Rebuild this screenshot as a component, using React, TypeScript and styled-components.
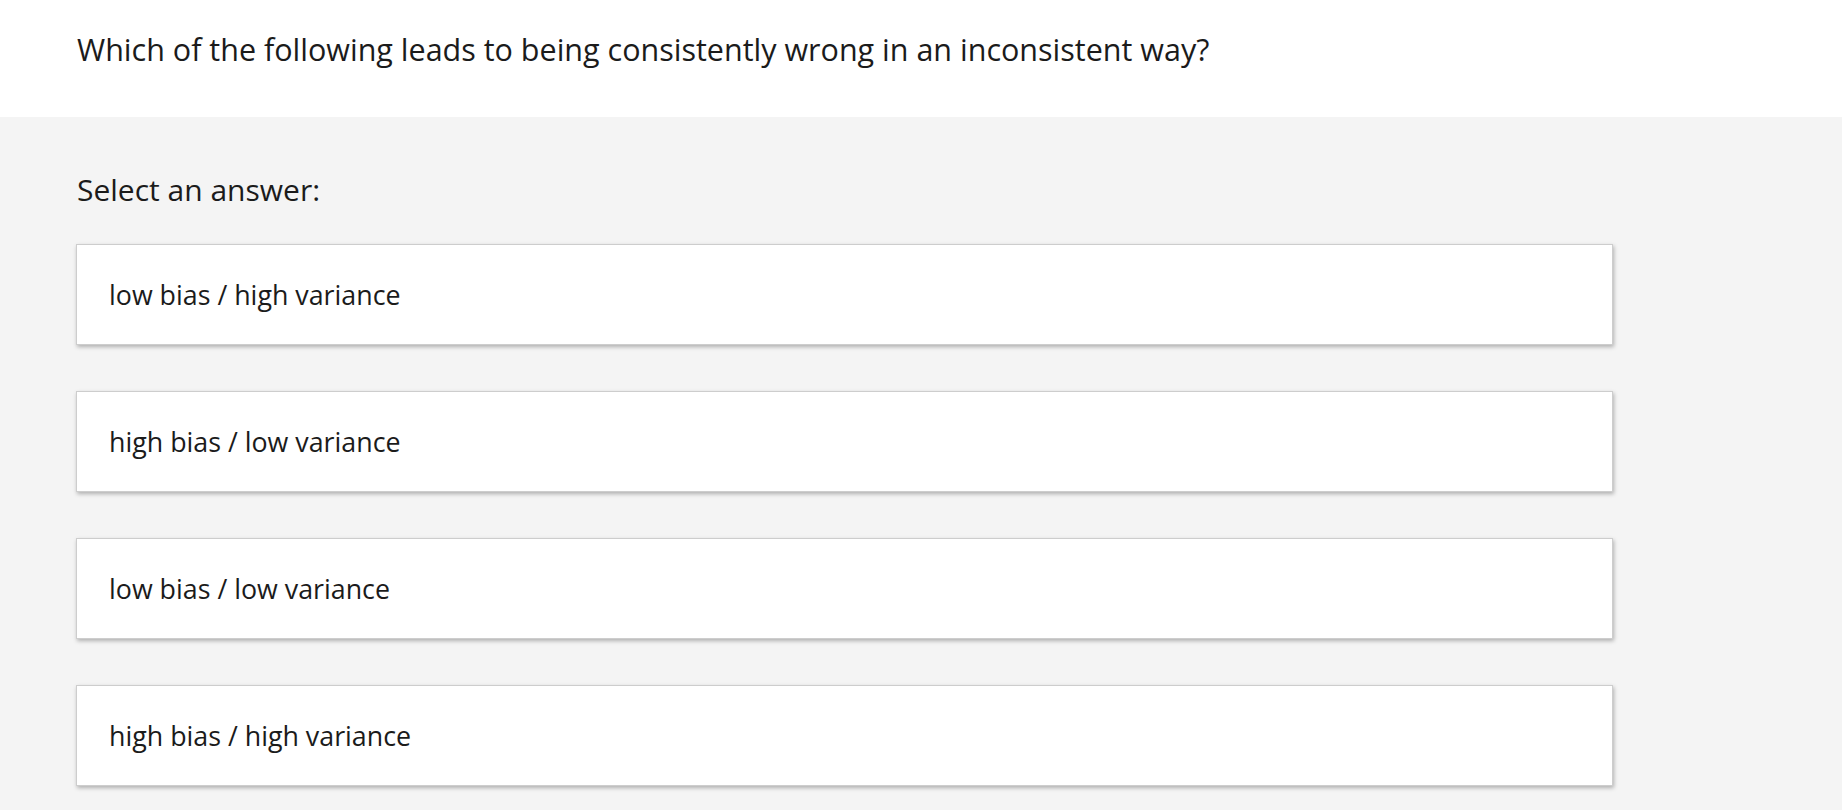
import React from "react";
import styled, { createGlobalStyle } from "styled-components";

const GlobalStyle = createGlobalStyle`
  html, body {
    margin: 0;
    padding: 0;
    background: #f4f4f4;
    font-family: "Open Sans", "Noto Sans", "Liberation Sans", sans-serif;
    color: #1b1b1b;
  }
`;

const Page = styled.div`
  min-height: 100vh;
  display: flex;
  flex-direction: column;
`;

const QuestionBar = styled.header`
  background: #ffffff;
  height: 117px;
  display: flex;
  align-items: center;
  padding: 0 77px;
  box-sizing: border-box;
`;

const Question = styled.h1`
  margin: 0 0 18px;
  font-size: 30.5px;
  font-weight: 400;
  line-height: 1.3;
`;

const AnswerArea = styled.section`
  padding: 53px 229px 40px 76px;
  display: flex;
  flex-direction: column;
`;

const Prompt = styled.div`
  font-size: 30px;
  line-height: 39px;
  padding-left: 1px;
  margin-bottom: 35px;
`;

const Options = styled.div`
  display: flex;
  flex-direction: column;
  gap: 46px;
`;

const Option = styled.button`
  display: flex;
  align-items: center;
  height: 101px;
  box-sizing: border-box;
  padding: 0 32px;
  background: #ffffff;
  border: 1px solid #cdcdcd;
  box-shadow: 1px 2px 4px rgba(0, 0, 0, 0.28);
  font-family: inherit;
  font-size: 26.8px;
  color: #1b1b1b;
  text-align: left;
  cursor: pointer;
`;

const answers = [
  "low bias / high variance",
  "high bias / low variance",
  "low bias / low variance",
  "high bias / high variance",
];

export default function App() {
  return (
    <Page>
      <GlobalStyle />
      <QuestionBar>
        <Question>
          Which of the following leads to being consistently wrong in an inconsistent way?
        </Question>
      </QuestionBar>
      <AnswerArea>
        <Prompt>Select an answer:</Prompt>
        <Options>
          {answers.map((a) => (
            <Option key={a}>{a}</Option>
          ))}
        </Options>
      </AnswerArea>
    </Page>
  );
}
